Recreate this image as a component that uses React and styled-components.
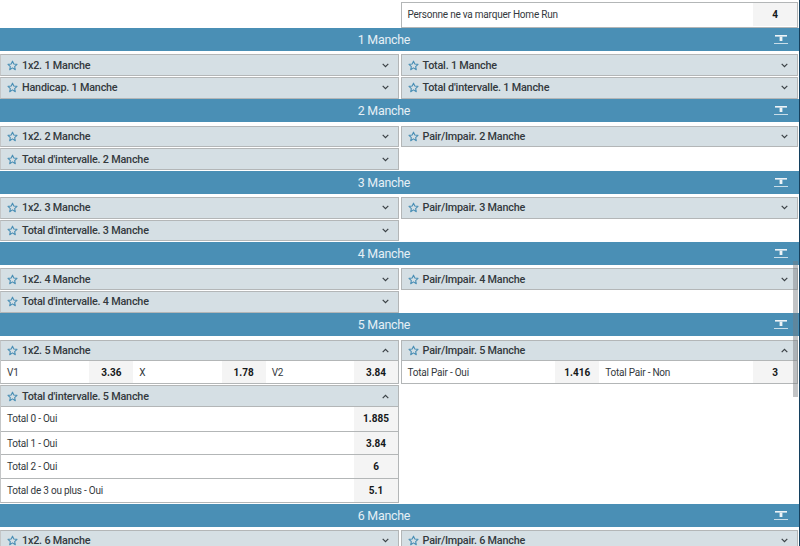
import React from "react";
import styled, { createGlobalStyle } from "styled-components";

const Global = createGlobalStyle`
  html, body {
    margin: 0;
    padding: 0;
    height: 546px;
    overflow: hidden;
    background: #fff;
    font-family: Roboto, "Liberation Sans", sans-serif;
  }
`;

const Page = styled.div`
  position: relative;
  width: 800px;
  height: 546px;
  box-sizing: border-box;
  border-right: 1px solid #14405e;
  overflow: hidden;
`;

const Top = styled.div`
  display: grid;
  grid-template-columns: 400.5px 397.5px;
  height: 28px;
  padding-top: 2px;
  box-sizing: border-box;
`;

const SectionRoot = styled.section`
  display: block;
`;

const SectionBar = styled.div`
  position: relative;
  display: flex;
  align-items: center;
  justify-content: center;
  height: 23px;
  padding-right: 31px;
  box-sizing: border-box;
  background: #4a8fb5;
  color: #e6f0f5;
  font-size: 12.4px;
  letter-spacing: -0.25px;
`;

const Collapse = styled.svg`
  position: absolute;
  right: 11px;
  top: 7px;
`;

const Columns = styled.div`
  display: grid;
  grid-template-columns: 400.5px 397.5px;
  padding-top: 3.4px;
  padding-bottom: 0.6px;
  align-items: start;
`;

const Column = styled.div`
  display: flex;
  flex-direction: column;
  gap: 1px;
`;

const Card = styled.div`
  box-sizing: border-box;
  width: ${props => (props.$right ? "397.5px" : "399px")};
  border: 1px solid #b3b6b7;
  border-left-color: ${props => (props.$right ? "#b3b6b7" : "#c4c6c7")};
  background: #fff;
`;

const CardHead = styled.div`
  display: flex;
  align-items: center;
  height: 19.67px;
  padding: 0 9px 0 6px;
  background: #d5dfe4;
  color: #33393d;
  font-size: 10.8px;
  font-weight: 500;
  letter-spacing: -0.2px;
`;

const CardTitle = styled.span`
  flex: 1;
  margin-left: 4px;
  white-space: nowrap;
`;

const Odds = styled.div`
  display: grid;
  grid-template-columns: repeat(${props => props.$cols}, 1fr);
  border-top: 1px solid #b3b6b7;
`;

const OddsList = styled.div`
  display: flex;
  flex-direction: column;
  border-top: 1px solid #b3b6b7;
`;

const Pick = styled.div`
  display: flex;
  align-items: stretch;
  height: ${props => props.$height || 22}px;
  box-sizing: border-box;
  font-size: 10px;
  letter-spacing: -0.22px;
  color: #33393d;
  border-top: ${props => (props.$line ? "1px solid #b3b6b7" : "none")};
`;

const PickName = styled.span`
  flex: 1;
  display: flex;
  align-items: center;
  padding-left: 6px;
  white-space: nowrap;
`;

const PickValue = styled.span`
  width: 44px;
  display: flex;
  align-items: center;
  justify-content: center;
  background: #f4f4f4;
  color: #15181a;
  font-weight: 700;
  font-size: 10px;
  letter-spacing: 0;
`;

const ScrollThumb = styled.div`
  position: absolute;
  right: 1.5px;
  top: 261px;
  width: 4.6px;
  height: 136px;
  background: rgba(120, 125, 128, 0.45);
`;

const Star = () => (
  <svg width="11" height="11" viewBox="0 0 24 24" fill="none" stroke="#4a8fb5" strokeWidth="2.4" strokeLinejoin="round">
    <path d="M12 2.5l2.9 6.3 6.9.8-5.1 4.7 1.4 6.8L12 17.2l-6.1 3.9 1.4-6.8-5.1-4.7 6.9-.8z" />
  </svg>
);

const Chevron = ({ up }) => (
  <svg width="7" height="5" viewBox="0 0 7 5" fill="none" stroke="#3a4145" strokeWidth="1.2">
    <path d={up ? "M.7 4.2l2.8-2.8 2.8 2.8" : "M.7.8l2.8 2.8L6.3.8"} />
  </svg>
);

const CollapseIcon = () => (
  <Collapse width="14" height="10" viewBox="0 0 14 10">
    <rect x="1" y="0" width="12" height="1.6" fill="#eef4f7" />
    <rect x="5.6" y="1.6" width="2.8" height="4.4" fill="#eef4f7" />
    <rect x="0" y="8" width="14" height="1" fill="#c9dde8" />
  </Collapse>
);

const Market = ({ title, right, open, children }) => (
  <Card $right={right}>
    <CardHead>
      <Star />
      <CardTitle>{title}</CardTitle>
      <Chevron up={open} />
    </CardHead>
    {children}
  </Card>
);

const Section = ({ n, left, right }) => (
  <SectionRoot>
    <SectionBar>
      {n} Manche
      <CollapseIcon />
    </SectionBar>
    <Columns>
      <Column>{left}</Column>
      <Column>{right}</Column>
    </Columns>
  </SectionRoot>
);

const simple = (n, rightName, leftSecond) => ({
  left: (
    <>
      <Market title={`1x2. ${n} Manche`} />
      <Market title={`${leftSecond}. ${n} Manche`} />
    </>
  ),
  right: (
    <>
      <Market right title={`${rightName}. ${n} Manche`} />
      {n === 1 && <Market right title="Total d'intervalle. 1 Manche" />}
    </>
  )
});

const intervals = [
  ["Total 0 - Oui", "1.885"],
  ["Total 1 - Oui", "3.84"],
  ["Total 2 - Oui", "6"],
  ["Total de 3 ou plus - Oui", "5.1"]
];

const pick = (name, value) => (
  <Pick key={name}>
    <PickName>{name}</PickName>
    <PickValue>{value}</PickValue>
  </Pick>
);

export default function App() {
  return (
    <Page>
      <Global />
      <Top>
        <div />
        <Card $right>
          <Pick $height={23}>
            <PickName>Personne ne va marquer Home Run</PickName>
            <PickValue>4</PickValue>
          </Pick>
        </Card>
      </Top>
      <Section n={1} {...simple(1, "Total", "Handicap")} />
      <Section n={2} {...simple(2, "Pair/Impair", "Total d'intervalle")} />
      <Section n={3} {...simple(3, "Pair/Impair", "Total d'intervalle")} />
      <Section n={4} {...simple(4, "Pair/Impair", "Total d'intervalle")} />
      <Section
        n={5}
        left={
          <>
            <Market open title="1x2. 5 Manche">
              <Odds $cols={3}>
                {pick("V1", "3.36")}
                {pick("X", "1.78")}
                {pick("V2", "3.84")}
              </Odds>
            </Market>
            <Market open title="Total d'intervalle. 5 Manche">
              <OddsList>
                {intervals.map(([name, value], i) => (
                  <Pick key={name} $height={23.8} $line={i > 0}>
                    <PickName>{name}</PickName>
                    <PickValue>{value}</PickValue>
                  </Pick>
                ))}
              </OddsList>
            </Market>
          </>
        }
        right={
          <Market right open title="Pair/Impair. 5 Manche">
            <Odds $cols={2}>
              {pick("Total Pair - Oui", "1.416")}
              {pick("Total Pair - Non", "3")}
            </Odds>
          </Market>
        }
      />
      <Section
        n={6}
        left={<Market title="1x2. 6 Manche" />}
        right={<Market right title="Pair/Impair. 6 Manche" />}
      />
      <ScrollThumb />
    </Page>
  );
}
